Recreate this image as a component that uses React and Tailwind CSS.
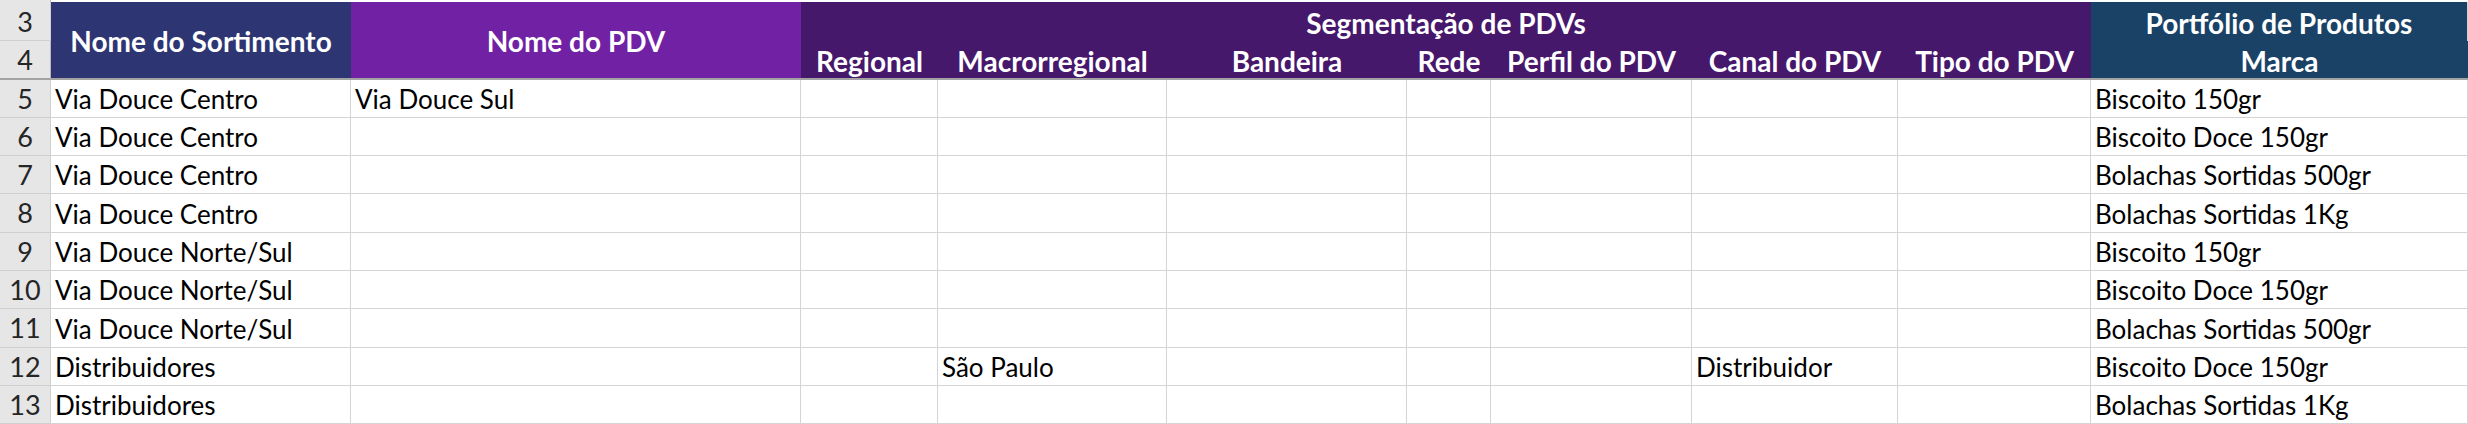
import React from 'react';

const cols = ['Regional', 'Macrorregional', 'Bandeira', 'Rede', 'Perfil do PDV', 'Canal do PDV', 'Tipo do PDV'];

const rows = [
  { n: 5, h: 'h-[38px]', v: ['Via Douce Centro', 'Via Douce Sul', '', '', '', '', '', '', '', 'Biscoito 150gr'] },
  { n: 6, h: 'h-[38px]', v: ['Via Douce Centro', '', '', '', '', '', '', '', '', 'Biscoito Doce 150gr'] },
  { n: 7, h: 'h-[38px]', v: ['Via Douce Centro', '', '', '', '', '', '', '', '', 'Bolachas Sortidas 500gr'] },
  { n: 8, h: 'h-[39px]', v: ['Via Douce Centro', '', '', '', '', '', '', '', '', 'Bolachas Sortidas 1Kg'] },
  { n: 9, h: 'h-[38px]', v: ['Via Douce Norte/Sul', '', '', '', '', '', '', '', '', 'Biscoito 150gr'] },
  { n: 10, h: 'h-[38px]', v: ['Via Douce Norte/Sul', '', '', '', '', '', '', '', '', 'Biscoito Doce 150gr'] },
  { n: 11, h: 'h-[39px]', v: ['Via Douce Norte/Sul', '', '', '', '', '', '', '', '', 'Bolachas Sortidas 500gr'] },
  { n: 12, h: 'h-[38px]', v: ['Distribuidores', '', '', 'São Paulo', '', '', '', 'Distribuidor', '', 'Biscoito Doce 150gr'] },
  { n: 13, h: 'h-[38px]', v: ['Distribuidores', '', '', '', '', '', '', '', '', 'Bolachas Sortidas 1Kg'] },
];

const grid = 'grid grid-cols-[51px_300px_450px_137px_229px_240px_84px_201px_206px_193px_377px]';

function RowHead({ children, className = '' }) {
  return (
    <div className={`flex items-center justify-center bg-[#e6e6e6] border-r border-[#b9b9b9] text-[27px] leading-[28px] font-normal text-[#262626] ${className}`}>
      {children}
    </div>
  );
}

export default function App() {
  return (
    <div className="w-[2468px] h-[424px] overflow-hidden bg-white text-[26px] leading-[28px] font-['Lato',sans-serif]">
      {/* top strip (end of row 2) */}
      <div className={`${grid} grid-rows-[2px] h-[2px]`}>
        <div className="bg-[#e6e6e6] border-r border-[#b9b9b9]" />
        <div className="col-span-10" />
      </div>

      {/* header rows 3-4 */}
      <div className={`${grid} grid-rows-[39px_39px] h-[78px] font-bold text-[28px] leading-[28px] text-white`}>
        <RowHead className="border-b border-[#cfcfcf] pt-[2px]">3</RowHead>
        <div className="row-span-2 flex items-center justify-center bg-[#2d3673] border-b-2 border-[#a3a3a3] pt-[1px]">Nome do Sortimento</div>
        <div className="row-span-2 flex items-center justify-center bg-[#7021a4] border-b-2 border-[#a3a3a3] pt-[1px]">Nome do PDV</div>
        <div className="col-span-7 flex items-center justify-center bg-[#46186b] pt-[3px]">Segmentação de PDVs</div>
        <div className="flex items-center justify-center bg-[#1a4266] border-r border-[#d4d4d4] pt-[3px]">Portfólio de Produtos</div>
        <RowHead className="border-b-2 !border-b-[#a3a3a3]">4</RowHead>
        {cols.map((c) => (
          <div key={c} className="flex items-center justify-center bg-[#46186b] border-b-2 border-[#a3a3a3] pt-[2px]">{c}</div>
        ))}
        <div className="flex items-center justify-center bg-[#1a4266] border-b-2 border-[#a3a3a3] pt-[2px]">Marca</div>
      </div>

      {/* data rows */}
      {rows.map((r) => (
        <div key={r.n} className={`${grid} grid-rows-[100%] ${r.h}`}>
          <RowHead className="border-b border-[#cfcfcf]">{r.n}</RowHead>
          {r.v.map((val, i) => (
            <div key={i} className="flex items-end border-r border-b border-[#d4d4d4] pl-[4px] pb-[4px] text-black whitespace-nowrap overflow-hidden">
              {val}
            </div>
          ))}
        </div>
      ))}

      {/* start of row 14 */}
      <div className={`${grid} grid-rows-[2px] h-[2px]`}>
        <div className="bg-[#e6e6e6] border-r border-[#b9b9b9]" />
        {Array.from({ length: 10 }).map((_, i) => (
          <div key={i} className="border-r border-[#d4d4d4]" />
        ))}
      </div>
    </div>
  );
}
